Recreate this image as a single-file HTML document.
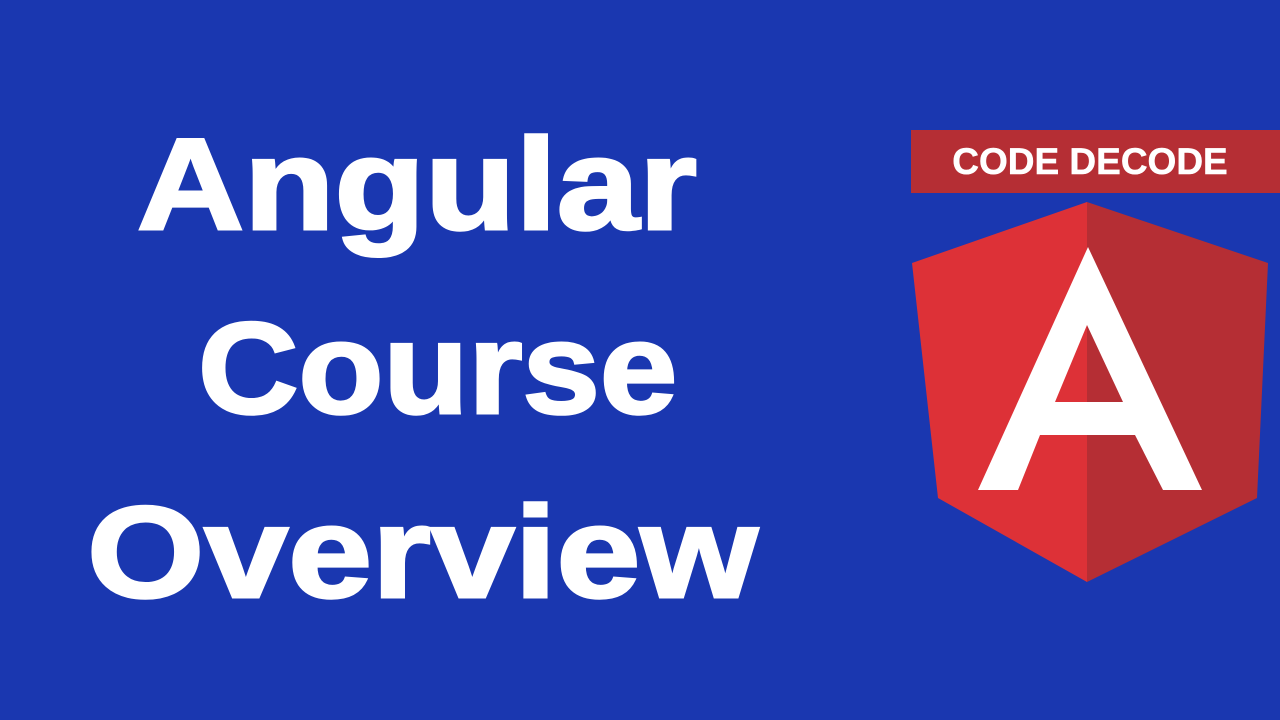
<!DOCTYPE html>
<html><head><meta charset="utf-8"><style>
html,body{margin:0;padding:0}
body{width:1280px;height:720px;background:#1a37b0;position:relative;overflow:hidden;font-family:"Liberation Sans",sans-serif}
.t{position:absolute;color:#fff;font-weight:bold;font-size:130px;line-height:130px;white-space:nowrap;transform-origin:0 0;-webkit-text-stroke:3px #fff}
</style></head><body>
<div class="t" style="left:137px;top:119px;transform:scaleX(1.14)">Angular</div>
<div class="t" style="left:198px;top:303px;transform:scaleX(1.07)">Course</div>
<div class="t" style="left:87px;top:487px;transform:scaleX(1.16)">Overview</div>
<div style="position:absolute;left:911px;top:130px;width:369px;height:63px;background:#b52e34"></div>
<div style="position:absolute;left:911px;top:130px;width:358px;height:63px;color:#fff;font-weight:bold;font-size:37px;line-height:63px;text-align:center;white-space:nowrap;-webkit-text-stroke:0.5px #fff">CODE DECODE</div>
<svg style="position:absolute;left:0;top:0" width="1280" height="720">
<polygon points="1087,202 912,263 938,498 1087,582" fill="#dd3137"/>
<polygon points="1087,202 1268,263 1257,498 1087,582" fill="#b52e34"/>
<path fill="#fff" fill-rule="evenodd" d="M1088,247 L978,490 L1018,490 L1040,435 L1135,435 L1163,490 L1202,490 Z M1087,325 L1055,402 L1123,402 Z"/>
</svg>
</body></html>
